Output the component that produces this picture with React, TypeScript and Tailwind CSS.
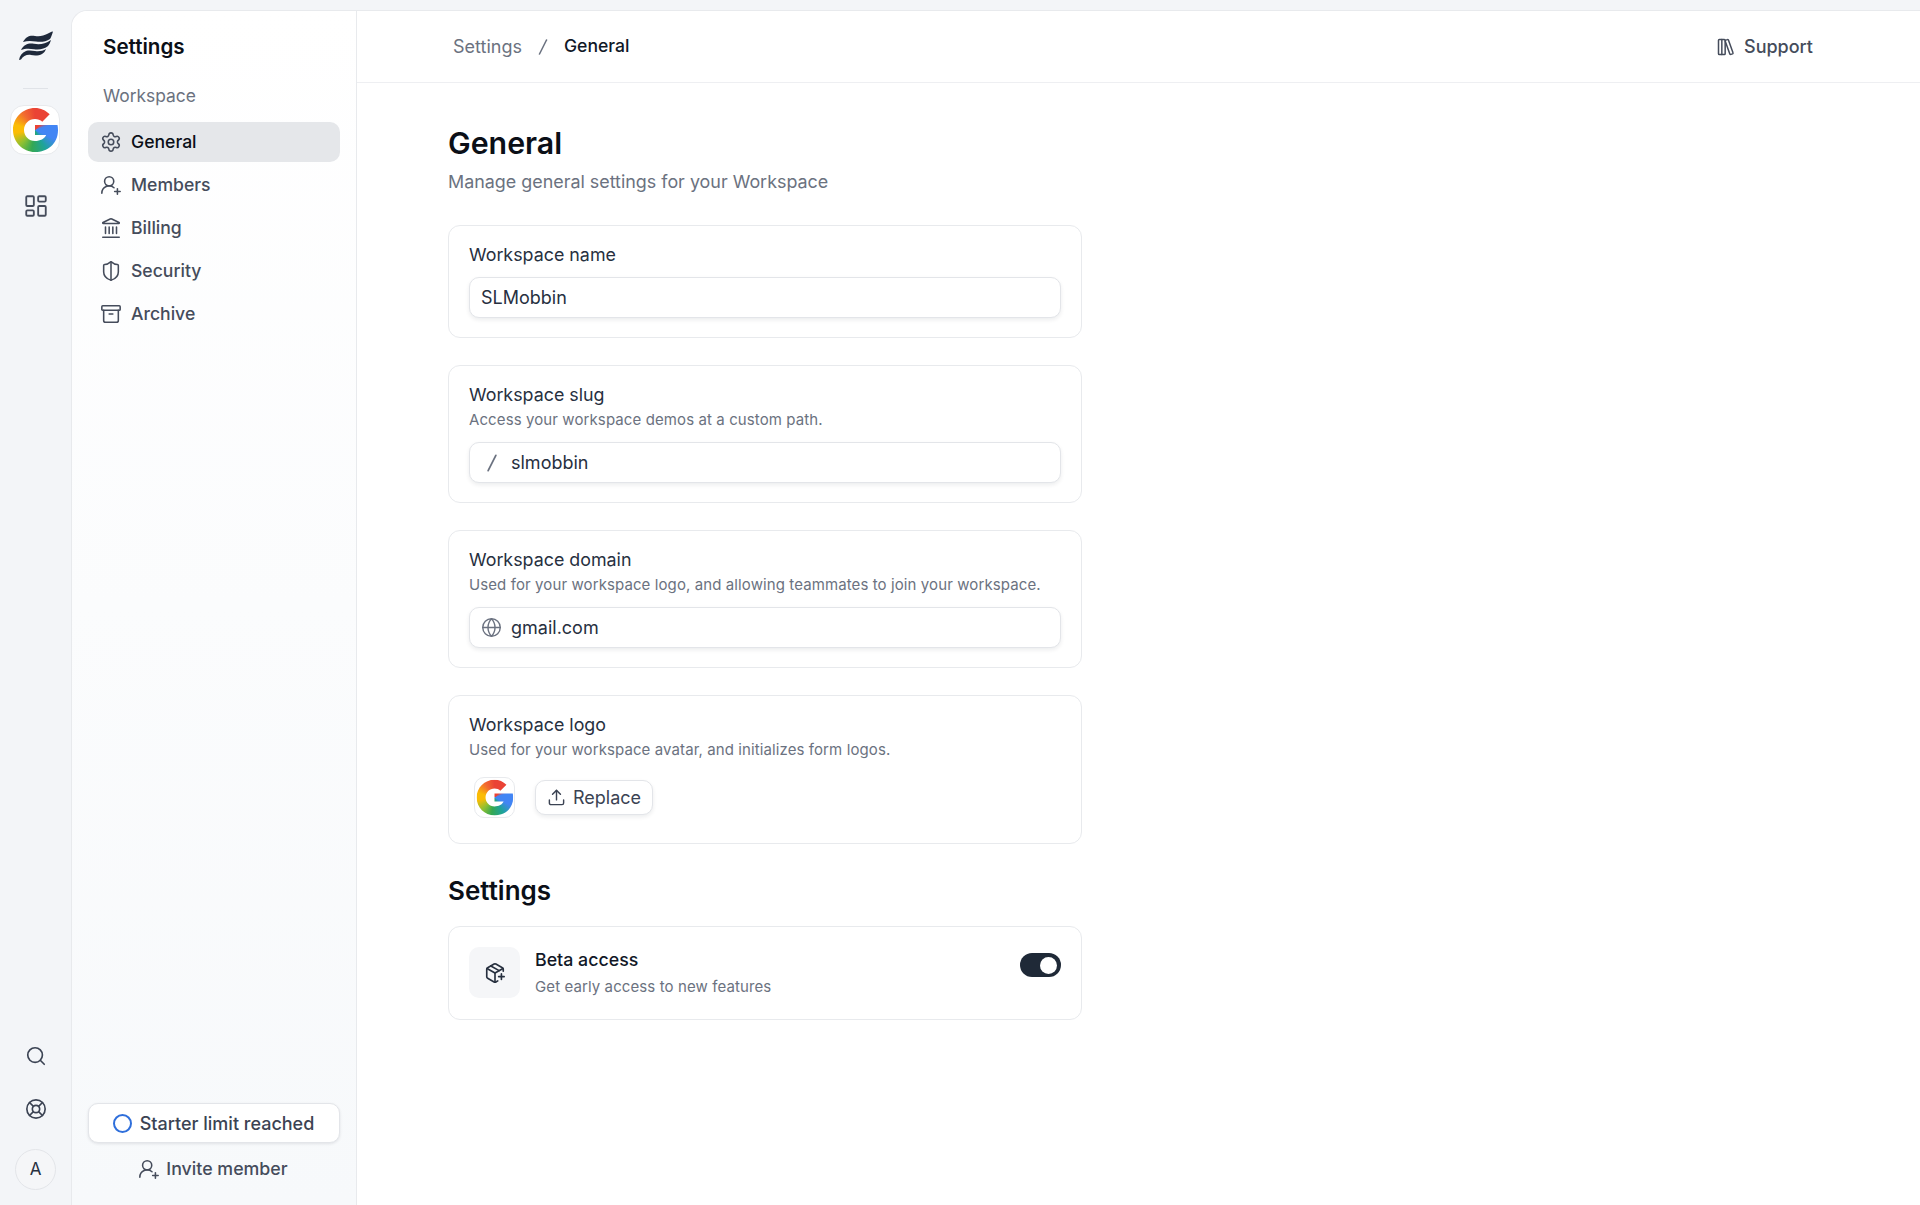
import { useId } from "react";
import {
  Archive,
  Globe,
  Landmark,
  LayoutDashboard,
  LibraryBig,
  LifeBuoy,
  PackagePlus,
  Search,
  Settings,
  ShieldHalf,
  Upload,
  UserRoundPlus,
} from "lucide-react";

const navItems = [
  { label: "General", icon: Settings, active: true },
  { label: "Members", icon: UserRoundPlus },
  { label: "Billing", icon: Landmark },
  { label: "Security", icon: ShieldHalf },
  { label: "Archive", icon: Archive },
];

const GoogleG = ({ size }: { size: number }) => {
  const id = useId();
  return (
    <svg width={size} height={size} viewBox="0 0 48 48">
      <defs>
        <clipPath id={id}>
          <path d="M46.500 19H24v10h11.200C33.600 32.800 29.200 35 24 35c-6.100 0-11-4.900-11-11s4.900-11 11-11c2.800 0 5.400 1 7.300 2.700l7.400-7.400C34.800 4.400 29.700 2 24 2 11.800 2 2 11.800 2 24s9.800 22 22 22c12.500 0 23-8 23-22 0-1.700-.2-3.400-.5-5z" />
        </clipPath>
      </defs>
      <g clipPath={`url(#${id})`}>
        <foreignObject x="0" y="0" width="48" height="48">
          <div className="w-full h-full bg-[conic-gradient(#ea4335_0deg,#ea4335_45deg,#4285f4_72deg,#4285f4_115deg,#1ea39a_150deg,#34a853_190deg,#8fc031_225deg,#fbbc05_262deg,#fbbc05_285deg,#f26b30_325deg,#ea4335_360deg)]"></div>
        </foreignObject>
      </g>
    </svg>
  );
};

const Logo = () => (
  <svg width="34" height="30" viewBox="0 0 34 30" fill="#1e293b">
    <path d="M4 11C7 5.500 11 4 16 5c5 1 9-.5 12-2 2-1.200 4-2.200 6-2.500-.8 2.800-1.800 5.500-3 7.500-4 3-10 3.200-14 2.500-5-.8-9-.8-13 .5z" />
    <path d="M2 19c3-6 8-7 13-6.200 6 .9 11 .2 17-3.800-.8 2.500-1.700 4.500-3 6-3 3-9 4-14 3.200-5-.8-9-.8-13 .8z" />
    <path d="M0 29c.8-4 3-7.500 7-9 3-1 6-.4 9 0 4 .5 8 0 11-2-.8 2.200-2 4-4 5-3 1.800-8 1.800-11 1-4-.8-8 1.200-10 4.500L0 29z" />
  </svg>
);

const Card = ({ title, desc, children }: { title: string; desc?: string; children: React.ReactNode }) => (
  <div className="rounded-xl border border-[#e8eaed] bg-white px-[20px] pt-[17px] pb-[19px]">
    <div className="text-[17.85px] leading-[24px] text-[#27303f]">{title}</div>
    {desc && <div className="text-[15px] leading-[25px] tracking-[0.1px] text-[#6b7280]">{desc}</div>}
    {children}
  </div>
);

const Field = ({ icon, value }: { icon?: React.ReactNode; value: string }) => (
  <div className="mt-[10px] flex h-[41px] items-center rounded-[10px] border border-[#e3e5e9] bg-white px-[11px] text-[18px] text-[#27303f] shadow-[0_2px_4px_rgba(17,24,39,0.08)]">
    {icon && <span className="flex w-[30px] shrink-0 items-center">{icon}</span>}
    {value}
  </div>
);

const Slash = ({ size, className }: { size: number; className: string }) => (
  <svg width={size} height={size} viewBox="0 0 20 20" fill="none" stroke="currentColor" strokeWidth="1.6" strokeLinecap="round" className={className}>
    <path d="M13.500 3 6.500 17" />
  </svg>
);

const App = () => {
  return (
    <div className="flex h-[1205px] w-[1920px] overflow-hidden bg-[#f3f5f8] font-['Inter',sans-serif] text-[#27303f]">
      <aside className="flex w-[71px] shrink-0 flex-col items-center pt-[31px] pb-[15px]">
        <Logo />
        <div className="mt-[27px] h-px w-[25px] bg-[#e0e3e8]"></div>
        <div className="mt-[16px] -ml-px flex h-[50px] w-[50px] items-center justify-center rounded-[14px] border border-[#e8eaed] bg-white">
          <GoogleG size={48} />
        </div>
        <LayoutDashboard className="mt-[38px] text-[#454c5b]" size={26} strokeWidth={1.7} />
        <div className="mt-auto flex flex-col items-center">
          <Search className="text-[#3b4353]" size={22} strokeWidth={1.8} />
          <LifeBuoy className="mt-[31px] text-[#3b4353]" size={22} strokeWidth={1.8} />
          <div className="mt-[29px] flex h-[41px] w-[41px] items-center justify-center rounded-full border border-[#e3e5e9] bg-[#f5f6f8] text-[17px] text-[#27303f]">
            A
          </div>
        </div>
      </aside>

      <div className="mt-[10px] flex min-w-0 flex-1 rounded-tl-2xl border-t border-l border-[#e8eaed] bg-white">
        <nav className="flex w-[285px] shrink-0 flex-col rounded-tl-2xl border-r border-[#e8eaed] bg-gradient-to-b from-white to-[#f7f9fb] pr-[16px] pb-[16px] pl-[16px]">
          <div className="mt-[22px] px-[15px] text-[20.6px] leading-[28px] font-semibold text-[#0b0f17]">Settings</div>
          <div className="mt-[21px] px-[15px] text-[17.4px] leading-[28px] text-[#6b7280]">Workspace</div>
          <div className="mt-[12px] flex flex-col gap-[3px]">
            {navItems.map((item) => {
              const Icon = item.icon;
              return (
                <div
                  key={item.label}
                  className={
                    item.active
                      ? "flex h-[40px] items-center gap-[9px] rounded-[10px] bg-[#e5e7ea] px-[12px] text-[17.6px] font-medium text-[#0b0f17]"
                      : "flex h-[40px] items-center gap-[9px] rounded-[10px] px-[12px] text-[17.6px] font-medium text-[#454c5b]"
                  }
                >
                  <Icon size={22} strokeWidth={1.7} className="shrink-0 text-[#454c5b]" />
                  {item.label}
                </div>
              );
            })}
          </div>
          <div className="mt-auto flex h-[40px] items-center justify-center gap-[8px] rounded-[10px] border border-[#e3e5e9] bg-white pr-[1px] text-[18px] font-medium text-[#3b4353] shadow-[0_1px_3px_rgba(17,24,39,0.1)]">
            <span className="h-[19px] w-[19px] rounded-full border-2 border-[#2f6fdb]"></span>
            Starter limit reached
          </div>
          <div className="mt-[6px] flex h-[40px] items-center justify-center gap-[6px] pr-[2px] text-[17.8px] font-medium text-[#454c5b]">
            <UserRoundPlus size={22} strokeWidth={1.7} />
            Invite member
          </div>
        </nav>

        <main className="flex min-w-0 flex-1 flex-col">
          <header className="flex h-[72px] shrink-0 items-center justify-between border-b border-[#eeeff2] pr-[107px] pl-[96px] text-[18px]">
            <div className="flex items-center">
              <span className="text-[#6b7280]">Settings</span>
              <Slash size={20} className="mx-[11px] text-[#6b7280]" />
              <span className="text-[17.6px] font-medium text-[#111827]">General</span>
            </div>
            <div className="flex items-center gap-[8px] font-medium text-[#454c5b]">
              <LibraryBig size={20} strokeWidth={1.8} />
              Support
            </div>
          </header>

          <div className="w-[725px] pt-[42px] pl-[91px]">
            <h1 className="text-[30.3px] leading-[36px] font-semibold text-[#0b0f17]">General</h1>
            <p className="mt-[7px] text-[17.9px] leading-[28px] text-[#6b7280]">Manage general settings for your Workspace</p>

            <div className="mt-[29px] flex flex-col gap-[27px]">
              <Card title="Workspace name">
                <Field value="SLMobbin" />
              </Card>
              <Card title="Workspace slug" desc="Access your workspace demos at a custom path.">
                <Field icon={<Slash size={22} className="text-[#6b7280]" />} value="slmobbin" />
              </Card>
              <Card title="Workspace domain" desc="Used for your workspace logo, and allowing teammates to join your workspace.">
                <Field icon={<Globe size={21} strokeWidth={1.6} className="text-[#6b7280]" />} value="gmail.com" />
              </Card>
              <Card title="Workspace logo" desc="Used for your workspace avatar, and initializes form logos.">
                <div className="mt-[15px] mb-[6px] flex items-center gap-[20px] pl-[5px]">
                  <div className="flex h-[41px] w-[41px] items-center justify-center rounded-[10px] border border-[#e8eaed] bg-white">
                    <GoogleG size={39} />
                  </div>
                  <div className="flex h-[35px] items-center gap-[7px] rounded-[10px] border border-[#e3e5e9] bg-white px-[11px] text-[18px] text-[#3b4353] shadow-[0_2px_4px_rgba(17,24,39,0.08)]">
                    <Upload size={19} strokeWidth={1.8} />
                    Replace
                  </div>
                </div>
              </Card>
            </div>

            <h2 className="mt-[31px] text-[26px] leading-[32px] font-semibold text-[#0b0f17]">Settings</h2>

            <div className="mt-[19px] flex h-[94px] items-start rounded-xl border border-[#e8eaed] bg-white p-[20px]">
              <div className="flex h-[51px] w-[51px] shrink-0 items-center justify-center rounded-[10px] bg-[#f5f6f8]">
                <PackagePlus size={22} strokeWidth={1.8} className="text-[#27303f]" />
              </div>
              <div className="mt-[1px] ml-[15px] flex-1">
                <div className="text-[17.8px] leading-[24px] font-medium text-[#111827]">Beta access</div>
                <div className="mt-[3px] text-[15px] leading-[24px] tracking-[0.1px] text-[#6b7280]">Get early access to new features</div>
              </div>
              <div className="mt-[6px] flex h-[24px] w-[41px] items-center justify-end rounded-full bg-[#1f2937] px-[4px]">
                <span className="h-[17px] w-[17px] rounded-full bg-white"></span>
              </div>
            </div>
          </div>
        </main>
      </div>
    </div>
  );
};

export default App;
